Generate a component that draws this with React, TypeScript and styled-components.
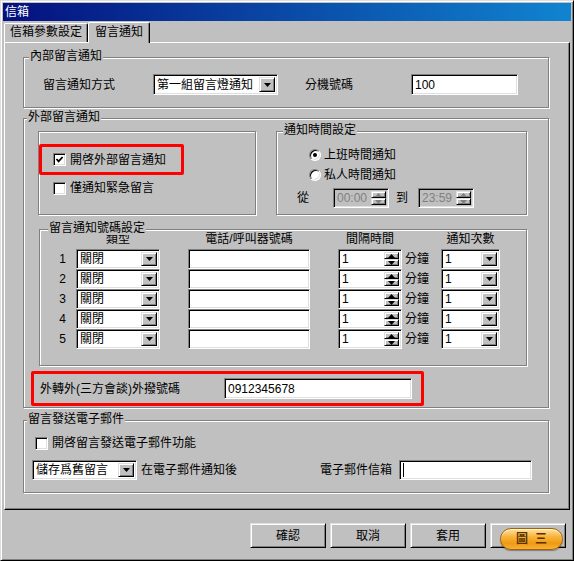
import React from "react";
import styled, { createGlobalStyle, css } from "styled-components";

const GlobalStyle = createGlobalStyle`
  html, body {
    margin: 0;
    padding: 0;
    background: #c0c0c0;
  }
  body {
    font-family: "Liberation Sans", "Noto Sans CJK TC", sans-serif;
    font-size: 12px;
    line-height: 14px;
    color: #000;
  }
`;

const sunken = css`
  border: 1px solid;
  border-color: #808080 #fff #fff #808080;
  box-shadow: inset 1px 1px 0 #000, inset -1px -1px 0 #dfdfdf;
`;

const raised = css`
  border: 1px solid;
  border-color: #dfdfdf #000 #000 #dfdfdf;
  box-shadow: inset 1px 1px 0 #fff, inset -1px -1px 0 #808080;
`;

const SWindow = styled.div`
  width: 574px;
  height: 561px;
  box-sizing: border-box;
  background: #c0c0c0;
  ${raised}
  padding: 2px;
  display: flex;
  flex-direction: column;
`;

const STitleBar = styled.div`
  height: 18px;
  flex-shrink: 0;
  display: flex;
  align-items: center;
  padding-left: 2px;
  color: #fff;
  background: linear-gradient(to right, #04107e, #1084d0);
`;

const STabStrip = styled.div`
  height: 21px;
  flex-shrink: 0;
  display: flex;
  align-items: flex-end;
  padding-left: 1px;
`;

const STab = styled.div<{ $w: number; $active?: boolean }>`
  position: relative;
  z-index: 1;
  box-sizing: border-box;
  width: ${(p) => p.$w}px;
  height: ${(p) => (p.$active ? 21 : 19)}px;
  margin-bottom: ${(p) => (p.$active ? -1 : 0)}px;
  background: #c0c0c0;
  border-top: 1px solid #fff;
  border-left: 1px solid #fff;
  border-right: 1px solid #000;
  border-radius: 2px 2px 0 0;
  box-shadow: inset -1px 0 0 #808080;
  display: flex;
  justify-content: center;
  padding-top: ${(p) => (p.$active ? 2 : 1)}px;
  white-space: nowrap;
`;

const SPanel = styled.div`
  width: 566px;
  height: 468px;
  margin-left: 1px;
  flex-shrink: 0;
  box-sizing: border-box;
  border: 1px solid;
  border-color: #fff #000 #000 #fff;
  box-shadow: inset -1px -1px 0 #808080;
  padding: 14px 0 0 18px;
  display: flex;
  flex-direction: column;
`;

const SGroup = styled.div<{ $w: number; $h: number; $mt?: number; $ml?: number }>`
  position: relative;
  box-sizing: border-box;
  flex-shrink: 0;
  width: ${(p) => p.$w}px;
  height: ${(p) => p.$h}px;
  margin-top: ${(p) => p.$mt ?? 0}px;
  margin-left: ${(p) => p.$ml ?? 0}px;
  border: 1px solid #808080;
  box-shadow: inset 1px 1px 0 #fff, 1px 1px 0 #fff;
  display: flex;
  flex-direction: column;
`;

const SLegend = styled.div<{ $left: number }>`
  position: absolute;
  top: -8px;
  left: ${(p) => p.$left}px;
  padding: 0 1px;
  line-height: 13px;
  background: #c0c0c0;
  white-space: nowrap;
`;

const SLabel = styled.span<{ $w?: number; $ml?: number }>`
  flex-shrink: 0;
  white-space: nowrap;
  width: ${(p) => (p.$w ? `${p.$w}px` : "auto")};
  margin-left: ${(p) => p.$ml ?? 0}px;
`;

const SField = styled.div<{ $w: number; $h?: number; $ml?: number }>`
  ${sunken}
  box-sizing: border-box;
  flex-shrink: 0;
  width: ${(p) => p.$w}px;
  height: ${(p) => p.$h ?? 20}px;
  margin-left: ${(p) => p.$ml ?? 0}px;
  background: #fff;
  padding: 0 3px;
  display: flex;
  align-items: center;
  white-space: nowrap;
  overflow: hidden;
`;

const SComboBox = styled(SField)`
  padding: 2px 2px 2px 3px;
`;

const SComboText = styled.span`
  flex: 1;
  overflow: hidden;
`;

const SDropButton = styled.div`
  ${raised}
  box-sizing: border-box;
  flex-shrink: 0;
  width: 16px;
  height: 100%;
  background: #c0c0c0;
  display: grid;
  place-items: center;
`;

const SSpinBox = styled(SField)<{ $off?: boolean }>`
  padding: 2px 2px 2px 3px;
  background: ${(p) => (p.$off ? "#c0c0c0" : "#fff")};
  color: ${(p) => (p.$off ? "#808080" : "#000")};
`;

const SSpinButtons = styled.div`
  margin-left: auto;
  flex-shrink: 0;
  width: 15px;
  height: 100%;
  display: flex;
  flex-direction: column;
`;

const SSpinHalf = styled.div`
  ${raised}
  flex: 1;
  box-sizing: border-box;
  background: #c0c0c0;
  display: grid;
  place-items: center;
`;

const SCheck = styled.div`
  ${sunken}
  box-sizing: border-box;
  flex-shrink: 0;
  width: 13px;
  height: 13px;
  background: #fff;
  display: grid;
  place-items: center;
`;

const SRadio = styled.div`
  box-sizing: border-box;
  flex-shrink: 0;
  width: 12px;
  height: 12px;
  border-radius: 50%;
  border: 1px solid;
  border-color: #808080 #fff #fff #808080;
  box-shadow: inset 1px 1px 0 #000, inset -1px -1px 0 #dfdfdf;
  background: #fff;
  display: grid;
  place-items: center;
`;

const SRadioDot = styled.div`
  width: 4px;
  height: 4px;
  border-radius: 50%;
  background: #000;
`;

const SCheckRow = styled.div<{ $mt?: number; $ml?: number }>`
  display: flex;
  align-items: center;
  gap: 4px;
  height: 20px;
  margin-top: ${(p) => p.$mt ?? 0}px;
  margin-left: ${(p) => p.$ml ?? 0}px;
`;

const SRedBox = styled.div<{ $w: number; $h: number; $mt: number; $ml?: number; $pl: number }>`
  box-sizing: border-box;
  flex-shrink: 0;
  width: ${(p) => p.$w}px;
  height: ${(p) => p.$h}px;
  margin-top: ${(p) => p.$mt}px;
  margin-left: ${(p) => p.$ml ?? 0}px;
  padding-left: ${(p) => p.$pl}px;
  border: 3px solid #ff0000;
  border-radius: 2px;
  display: flex;
  align-items: center;
`;

const SInnerRow = styled.div`
  display: flex;
  align-items: center;
  height: 21px;
  margin: 16px 0 0 19px;
`;

const SSplit = styled.div`
  display: flex;
  gap: 20px;
  margin: 12px 0 0 14px;
`;

const SRadioList = styled.div`
  display: flex;
  flex-direction: column;
  padding: 13px 0 0 32px;
`;

const SRadioRow = styled.div`
  display: flex;
  align-items: center;
  gap: 3px;
  height: 20px;
`;

const SSpinRow = styled.div`
  display: flex;
  align-items: center;
  height: 20px;
  margin-top: 3px;
  padding-left: 20px;
`;

const SGridRow = styled.div<{ $head?: boolean }>`
  display: flex;
  align-items: ${(p) => (p.$head ? "flex-end" : "center")};
  height: ${(p) => (p.$head ? 19 : 20)}px;
  line-height: ${(p) => (p.$head ? "13px" : "14px")};
  padding-bottom: ${(p) => (p.$head ? 3 : 0)}px;
  box-sizing: border-box;
`;

const SHead = styled.span<{ $w: number; $ml?: number }>`
  flex-shrink: 0;
  width: ${(p) => p.$w}px;
  margin-left: ${(p) => p.$ml ?? 0}px;
  text-align: center;
  white-space: nowrap;
`;

const SNum = styled.span`
  flex-shrink: 0;
  width: 36px;
  box-sizing: border-box;
  padding-right: 10px;
  text-align: right;
`;

const SUnit = styled.span`
  flex-shrink: 0;
  width: 39px;
  box-sizing: border-box;
  padding-left: 3px;
`;

const SEmailRow = styled.div`
  display: flex;
  align-items: center;
  height: 20px;
  margin: 7px 0 0 8px;
`;

const SCaret = styled.span`
  width: 1px;
  height: 14px;
  background: #000;
`;

const SFooter = styled.div`
  display: flex;
  justify-content: flex-end;
  gap: 4px;
  padding: 13px 5px 0 0;
`;

const SButton = styled.div`
  ${raised}
  position: relative;
  box-sizing: border-box;
  width: 76px;
  height: 25px;
  background: #c0c0c0;
  display: grid;
  place-items: center;
`;

const SPill = styled.div`
  position: absolute;
  left: 9px;
  top: 4px;
  width: 63px;
  height: 22px;
  box-sizing: border-box;
  border-radius: 11px;
  border: 1px solid #a86200;
  background: linear-gradient(to bottom, #ffe3a8 0%, #f8b43c 38%, #f09a12 72%, #f6b03c 100%);
  box-shadow: inset 0 1px 0 #fff4d6, 0 1px 1px rgba(0, 0, 0, 0.35);
  display: flex;
  align-items: center;
  justify-content: center;
  gap: 7px;
  color: #5a3200;
  font-weight: bold;
`;

const DownArrow = ({ color = "#000" }: { color?: string }) => (
  <svg width="7" height="4" viewBox="0 0 7 4">
    <path d="M0 0h7L3.5 4z" fill={color} />
  </svg>
);

const UpArrow = ({ color = "#000" }: { color?: string }) => (
  <svg width="7" height="4" viewBox="0 0 7 4">
    <path d="M0 4h7L3.5 0z" fill={color} />
  </svg>
);

const Combo = ({ w, h, ml, text }: { w: number; h?: number; ml?: number; text: string }) => (
  <SComboBox $w={w} $h={h} $ml={ml}>
    <SComboText>{text}</SComboText>
    <SDropButton>
      <DownArrow />
    </SDropButton>
  </SComboBox>
);

const Spin = ({ w, ml, text, off }: { w: number; ml?: number; text: string; off?: boolean }) => (
  <SSpinBox $w={w} $ml={ml} $off={off}>
    <SComboText>{text}</SComboText>
    <SSpinButtons>
      <SSpinHalf>
        <UpArrow color={off ? "#808080" : "#000"} />
      </SSpinHalf>
      <SSpinHalf>
        <DownArrow color={off ? "#808080" : "#000"} />
      </SSpinHalf>
    </SSpinButtons>
  </SSpinBox>
);

const Checkbox = ({ checked }: { checked?: boolean }) => (
  <SCheck>
    {checked && (
      <svg width="9" height="9" viewBox="0 0 9 9">
        <polyline points="1.5,4 3.6,6.3 7.6,2" fill="none" stroke="#000" strokeWidth="1.8" />
      </svg>
    )}
  </SCheck>
);

const rows = [1, 2, 3, 4, 5];

export default function App() {
  return (
    <>
      <GlobalStyle />
      <SWindow>
        <STitleBar>信箱</STitleBar>
        <STabStrip>
          <STab $w={84}>信箱參數設定</STab>
          <STab $w={62} $active>
            留言通知
          </STab>
        </STabStrip>
        <SPanel>
          <SGroup $w={526} $h={51}>
            <SLegend $left={5}>內部留言通知</SLegend>
            <SInnerRow>
              <SLabel $w={110}>留言通知方式</SLabel>
              <Combo w={125} h={21} text="第一組留言燈通知" />
              <SLabel $w={106} $ml={27}>
                分機號碼
              </SLabel>
              <SField $w={107} $h={21}>
                100
              </SField>
            </SInnerRow>
          </SGroup>

          <SGroup $w={526} $h={290} $mt={10}>
            <SLegend $left={3}>外部留言通知</SLegend>
            <SSplit>
              <SGroup $w={218} $h={84}>
                <SRedBox $w={145} $h={31} $mt={12} $pl={11}>
                  <SCheckRow>
                    <Checkbox checked />
                    開啓外部留言通知
                  </SCheckRow>
                </SRedBox>
                <SCheckRow $mt={3} $ml={14}>
                  <Checkbox />
                  僅通知緊急留言
                </SCheckRow>
              </SGroup>
              <SGroup $w={251} $h={84}>
                <SLegend $left={6}>通知時間設定</SLegend>
                <SRadioList>
                  <SRadioRow>
                    <SRadio>
                      <SRadioDot />
                    </SRadio>
                    上班時間通知
                  </SRadioRow>
                  <SRadioRow>
                    <SRadio />
                    私人時間通知
                  </SRadioRow>
                </SRadioList>
                <SSpinRow>
                  <SLabel $w={36}>從</SLabel>
                  <Spin w={56} text="00:00" off />
                  <SLabel $w={22} $ml={7}>
                    到
                  </SLabel>
                  <Spin w={56} text="23:59" off />
                </SSpinRow>
              </SGroup>
            </SSplit>

            <SGroup $w={488} $h={137} $mt={14} $ml={15}>
              <SLegend $left={8}>留言通知號碼設定</SLegend>
              <SGridRow $head>
                <SHead $w={36} />
                <SHead $w={84}>類型</SHead>
                <SHead $w={122} $ml={28}>
                  電話/呼叫器號碼
                </SHead>
                <SHead $w={64} $ml={28}>
                  間隔時間
                </SHead>
                <SHead $w={39} />
                <SHead $w={59}>通知次數</SHead>
              </SGridRow>
              {rows.map((n) => (
                <SGridRow key={n}>
                  <SNum>{n}</SNum>
                  <Combo w={84} text="關閉" />
                  <SField $w={122} $ml={28} />
                  <Spin w={64} ml={28} text="1" />
                  <SUnit>分鐘</SUnit>
                  <Combo w={59} text="1" />
                </SGridRow>
              ))}
            </SGroup>

            <SRedBox $w={393} $h={35} $mt={5} $ml={7} $pl={6}>
              <SLabel $w={184}>外轉外(三方會談)外撥號碼</SLabel>
              <SField $w={188} $h={21}>
                0912345678
              </SField>
            </SRedBox>
          </SGroup>

          <SGroup $w={526} $h={73} $mt={12}>
            <SLegend $left={3}>留言發送電子郵件</SLegend>
            <SCheckRow $mt={12} $ml={11}>
              <Checkbox />
              開啓留言發送電子郵件功能
            </SCheckRow>
            <SEmailRow>
              <Combo w={105} text="儲存爲舊留言" />
              <SLabel $w={179} $ml={4}>
                在電子郵件通知後
              </SLabel>
              <SLabel $w={79}>電子郵件信箱</SLabel>
              <SField $w={133}>
                <SCaret />
              </SField>
            </SEmailRow>
          </SGroup>
        </SPanel>
        <SFooter>
          <SButton>確認</SButton>
          <SButton>取消</SButton>
          <SButton>套用</SButton>
          <SButton>
            <SPill>
              <span>圖</span>
              <span>三</span>
            </SPill>
          </SButton>
        </SFooter>
      </SWindow>
    </>
  );
}
